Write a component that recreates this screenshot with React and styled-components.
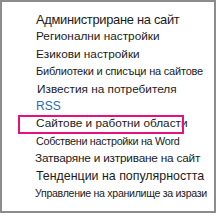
import React from "react";
import styled, { createGlobalStyle } from "styled-components";

const Global = createGlobalStyle`
  html, body { margin: 0; padding: 0; background: #fff; }
  body { font-family: "Liberation Sans", Arial, sans-serif; }
`;

const Frame = styled.div`
  box-sizing: border-box;
  width: 216px;
  height: 213px;
  border: 2px solid #8c8c8c;
  background: #fff;
  padding: 9px 0 0 34px;
`;

const Menu = styled.ul`
  list-style: none;
  margin: 0;
  padding: 0;
  display: flex;
  flex-direction: column;
`;

const Item = styled.li`
  position: relative;
  height: 17.4px;
  line-height: 17.4px;
  font-size: ${(p) => p.$size}px;
  letter-spacing: ${(p) => p.$ls || 0}px;
  color: ${(p) => (p.$link ? "#2b6cb8" : "#1b1b1b")};
  white-space: nowrap;
  margin-left: ${(p) => p.$dx || 0}px;

  ${(p) =>
    p.$marked &&
    `
    &::before {
      content: "";
      position: absolute;
      left: ${-18 - (p.$dx || 0)}px;
      top: 0px;
      width: 162px;
      height: 15px;
      border: 2px solid #e5117f;
    }
  `}
`;

const items = [
  { t: "Администриране на сайт", size: 12.9, ls: -0.3 },
  { t: "Регионални настройки", size: 11.8 },
  { t: "Езикови настройки", size: 11.8 },
  { t: "Библиотеки и списъци на сайтове", size: 11, ls: -0.2 },
  { t: "Известия на потребителя", size: 11.8, dx: 1 },
  { t: "RSS", size: 12, link: true },
  { t: "Сайтове и работни области", size: 11.8, marked: true },
  { t: "Собствени настройки на Word", size: 10.8, ls: -0.3 },
  { t: "Затваряне и изтриване на сайт", size: 11.8, ls: -0.2, dx: -1 },
  { t: "Тенденции на популярността", size: 12.4 },
  { t: "Управление на хранилище за изрази", size: 10.6, ls: -0.3, dx: -1 },
];

export default function App() {
  return (
    <>
      <Global />
      <Frame>
        <Menu>
          {items.map((it) => (
            <Item
              key={it.t}
              $size={it.size}
              $ls={it.ls}
              $link={it.link}
              $marked={it.marked}
              $dx={it.dx}
            >
              {it.t}
            </Item>
          ))}
        </Menu>
      </Frame>
    </>
  );
}
